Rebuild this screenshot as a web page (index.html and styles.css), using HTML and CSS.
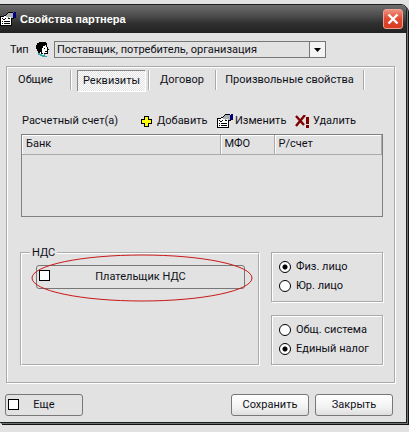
FILE: index.html
```html
<!DOCTYPE html>
<html lang="ru">
<head>
<meta charset="utf-8">
<title>Свойства партнера</title>
<link rel="stylesheet" href="styles.css">
</head>
<body>
<svg class="defs" aria-hidden="true">
  <symbol id="props" viewBox="0 0 16 15">
    <path fill="#000" d="M0 4h4V3h2V2h1V1h1V0h5v1h1v6h-2v7H0z"/>
    <path fill="#fff" d="M1 5h10v8H1z"/>
    <path fill="#aab0b4" d="M7 2h1V1h5v5h-2V5H9v2H8V5H6V3h1z"/>
    <path fill="#fff" d="M4 4h2v1h1v2H6v1H5V6H4z"/>
    <path fill="#000" d="M2 6h1v1h1v1H3V7H2zM4 7h1V6h1v1H5v1H4zM2 9h1v1H2zM4 9h6v1H4zM2 11h1v1H2zM4 11h6v1H4zM8 6h2v1H8z"/>
    <path fill="#000080" d="M13 1h1V0h2v6h-2V5h-1z"/>
  </symbol>
</svg>
<main class="window">
  <header class="titlebar">
    <svg class="icon-props"><use href="#props"/></svg>
    <h1>Свойства партнера</h1>
    <button class="close" type="button" aria-label="Закрыть окно">
      <svg viewBox="0 0 12 12"><path d="M1.500 1.500l9 9M10.500 1.500l-9 9" stroke="#fff" stroke-width="2.400"/></svg>
    </button>
  </header>
  <form class="content">
    <div class="type-row">
      <label for="type">Тип</label>
      <svg class="icon-face" viewBox="0 0 13 15" aria-hidden="true">
        <path fill="#fff" d="M5 4h6v2h1v3h-1v3H8v2H4V9h1z"/>
        <path fill="#000" d="M3 0h7v1h1v2H9v1H7v2H6v3H5v1H4v1H2V9H1V7H0V3h1V1h2zM10 3h1v2h1v2h1v1h-1v4H8v-1h3V5h-1zM5 9h1v2h1v1H5zM8 6h1v1H8zM9 9h2v1H9z"/>
        <path fill="#3aa6a0" d="M2 11h2v1h2v1h2v-1h1v2h2v1H6v-1H4v-1H2z"/>
      </svg>
      <div class="select">
        <select id="type"><option>Поставщик, потребитель, организация</option></select>
        <span class="arrow"><svg viewBox="0 0 7 4"><path d="M0 0h7L3.500 4z"/></svg></span>
      </div>
    </div>

    <section class="panel">
      <nav class="tabs">
        <button type="button" class="tab general">Общие</button>
        <button type="button" class="tab active">Реквизиты</button>
        <button type="button" class="tab contract">Договор</button>
        <button type="button" class="tab custom">Произвольные свойства</button>
      </nav>

      <div class="page">
        <div class="tools">
          <span class="caption">Расчетный счет(а)</span>
          <button type="button" class="tool add"><svg class="icon-add" viewBox="0 0 11 11"><path fill="#000" d="M3 0h5v3h3v5H8v3H3V8H0V3h3z"/><path fill="#ff0" d="M4 1h3v3h3v3H7v3H4V7H1V4h3z"/></svg>Добавить</button>
          <button type="button" class="tool edit"><svg class="icon-props"><use href="#props"/></svg>Изменить</button>
          <button type="button" class="tool"><svg class="icon-delete" viewBox="0 0 15 13"><path fill="none" stroke="#800000" stroke-width="2.400" d="M1 1l8 9M10 0L1 11"/><path fill="#800000" d="M11 2h3v7h-3zM11 10h3v3h-3z"/></svg>Удалить</button>
        </div>

        <div class="grid">
          <table>
            <thead><tr><th class="bank">Банк</th><th class="mfo">МФО</th><th>Р/счет</th></tr></thead>
          </table>
        </div>

        <div class="groups">
          <fieldset class="vat">
            <legend>НДС</legend>
            <label class="check-button payer"><input type="checkbox"><span>Плательщик НДС</span></label>
            <svg class="mark" viewBox="0 0 222 48" preserveAspectRatio="none" aria-hidden="true"><ellipse cx="111" cy="24" rx="110" ry="23"/></svg>
          </fieldset>
          <div class="options">
            <div class="radios" role="radiogroup" aria-label="Вид лица">
              <label><input type="radio" name="person" checked>Физ. лицо</label>
              <label><input type="radio" name="person">Юр. лицо</label>
            </div>
            <div class="radios" role="radiogroup" aria-label="Налогообложение">
              <label><input type="radio" name="tax">Общ. система</label>
              <label><input type="radio" name="tax" checked>Единый налог</label>
            </div>
          </div>
        </div>
      </div>
    </section>

    <footer class="actions">
      <label class="check-button more"><input type="checkbox"><span>Еще</span></label>
      <button type="button" class="push save">Сохранить</button>
      <button type="button" class="push">Закрыть</button>
    </footer>
  </form>
</main>
</body>
</html>
```
FILE: styles.css
```css
* { box-sizing: border-box; }

body {
  margin: 0;
  padding: 4px 2px 8px 0;
  background: #e2e2e2;
  color: #101018;
  font: 11px/16px Roboto, "Liberation Sans", sans-serif;
}

button, select, input { font: inherit; color: inherit; margin: 0; }
button { padding: 0; border: 0; background: none; }
svg { flex: none; display: block; }
.defs { position: absolute; width: 0; height: 0; }

.window {
  border: solid #1c2020;
  border-width: 1px 1px 1px 0;
  border-top-right-radius: 6px;
  background: #e2e2e2;
  box-shadow: 1px 1px #707474, 2px 2px #101414;
  overflow: hidden;
}

.titlebar {
  display: flex;
  align-items: center;
  height: 28px;
  padding-right: 3px;
  background: linear-gradient(#6c6c6c, #505050 35%, #303030 65%, #222);
}
.titlebar h1 {
  flex: 1;
  margin: 0 0 0 4px;
  color: #fff;
  font: bold 11px/16px "Liberation Sans", sans-serif;
}
.close {
  display: grid;
  place-items: center;
  width: 20px;
  height: 20px;
  border: 1px solid #f0a090;
  border-radius: 3px;
  background: linear-gradient(#f09080, #e04830 50%, #d83c20);
}
.close svg { width: 12px; height: 12px; }

.icon-props { width: 16px; height: 15px; shape-rendering: crispEdges; }
.icon-face { width: 13px; height: 15px; shape-rendering: crispEdges; }
.icon-add { width: 11px; height: 11px; shape-rendering: crispEdges; }
.icon-delete { width: 15px; height: 13px; }

.content { padding: 8px 11px 6px 5px; }

.type-row {
  display: flex;
  align-items: center;
  gap: 5px;
  padding-left: 5px;
}
.type-row label { width: 21px; }
.select {
  display: flex;
  flex: 0 0 272px;
  height: 17px;
  border: 1px solid #777;
  position: relative;
}
.select select {
  appearance: none;
  flex: 1;
  min-width: 0;
  padding: 0 0 0 2px;
  border: 0;
  background: none;
  line-height: 15px;
}
.arrow {
  position: absolute;
  right: 0;
  top: 0;
  display: grid;
  place-items: center;
  width: 16px;
  height: 15px;
  border-left: 1px solid #777;
  background: #f4f4f4;
  pointer-events: none;
}
.arrow svg { width: 7px; height: 4px; }

.panel {
  margin: 8px 0 0 1px;
  padding: 2px 11px 16px 0;
  border: 1px solid #aaa;
  box-shadow: 1px 1px #fff, inset 1px 1px #fff;
}

.tabs { display: flex; height: 22px; }
.tab {
  margin: 1px 0;
  border-right: 1px solid #aaa;
  box-shadow: 1px 0 #fff;
}
.tab.general { width: 64px; padding-right: 6px; }
.tab.active {
  width: 68px;
  margin: 1px 3px 0 6px;
  border: solid #888;
  border-width: 1px 0 0 1px;
  background: repeating-conic-gradient(#fff 0 25%, #e2e2e2 0 50%) 0 0 / 2px 2px;
  box-shadow: 1px 1px #fff;
}
.tab.contract {
  width: 68px;
  border-left: 1px solid #aaa;
  box-shadow: 1px 0 #fff, inset 1px 0 #fff;
}
.tab.custom { width: 148px; }

.page { padding-left: 14px; }

.tools {
  display: flex;
  align-items: center;
  height: 16px;
  margin: 22px 0 5px;
}
.caption { width: 120px; padding-left: 1px; }
.tool {
  display: flex;
  align-items: center;
  gap: 5px;
}
.tool.add { width: 76px; }
.tool.edit { width: 78px; gap: 2px; }
.tool:last-child { gap: 3px; }

.grid {
  height: 83px;
  border: 1px solid #808080;
}
table { width: 100%; border-collapse: collapse; table-layout: fixed; }
th {
  height: 19px;
  padding: 0 4px;
  border-bottom: 1px solid #aaa;
  border-right: 1px solid #aaa;
  box-shadow: inset 1px 1px #fff;
  text-align: left;
  font-weight: normal;
}
.bank { width: 198px; }
.mfo { width: 54px; }

.groups {
  display: flex;
  gap: 11px;
  margin: 27px 0 0 -1px;
}
.vat {
  flex: 1;
  position: relative;
  min-width: 0;
  height: 122px;
  margin: 0;
  padding: 3px 13px 0 14px;
  border: 2px groove #fff;
}
.vat legend { margin-left: -6px; padding: 0 2px; line-height: 18px; }

.check-button {
  display: flex;
  align-items: flex-start;
  border: 1px solid #777;
  border-radius: 3px;
}
.check-button span { flex: 1; align-self: center; text-align: center; }
.payer { height: 24px; }
input[type="checkbox"] {
  appearance: none;
  flex: none;
  width: 11px;
  height: 11px;
  margin: 4px -13px 0 2px;
  border: 1px solid #000;
  background: #fff;
}
.mark {
  position: absolute;
  left: 9px;
  top: -8px;
  width: 222px;
  height: 48px;
  pointer-events: none;
}
.mark ellipse { fill: none; stroke: #c81818; stroke-width: 1; }

.options {
  display: flex;
  flex-direction: column;
  gap: 13px;
  width: 112px;
  padding-top: 8px;
}
.radios {
  height: 50px;
  padding: 4px 0 0 7px;
  border: 1px solid #aaa;
  box-shadow: 1px 1px #fff, inset 1px 1px #fff;
}
.radios label {
  display: flex;
  align-items: center;
  gap: 5px;
  height: 19px;
}
input[type="radio"] {
  appearance: none;
  width: 12px;
  height: 12px;
  border: 1px solid #000;
  border-radius: 50%;
  background: #fff;
}
input[type="radio"]:checked { background: radial-gradient(circle, #000 2px, #fff 3px); }

.actions {
  display: flex;
  gap: 6px;
  margin: 11px 2px 0 0;
}
.more { width: 78px; height: 22px; }
.push {
  width: 78px;
  height: 22px;
  border: 1px solid #777;
  border-radius: 3px;
  background: linear-gradient(#fff, #f2f2f2 60%, #dedede);
}
.save { margin-left: auto; }
```
